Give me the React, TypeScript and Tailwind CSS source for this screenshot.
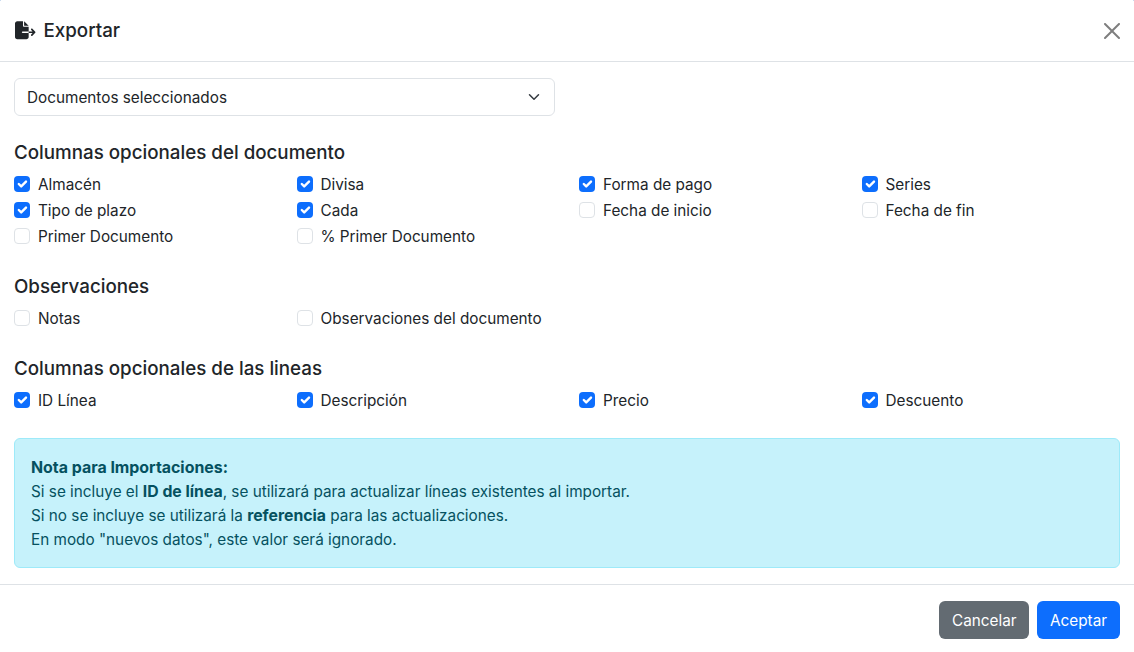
import { FaFileExport } from "react-icons/fa6";

interface Column {
  label: string;
  checked: boolean;
}

const documentColumns: Column[] = [
  { label: "Almacén", checked: true },
  { label: "Divisa", checked: true },
  { label: "Forma de pago", checked: true },
  { label: "Series", checked: true },
  { label: "Tipo de plazo", checked: true },
  { label: "Cada", checked: true },
  { label: "Fecha de inicio", checked: false },
  { label: "Fecha de fin", checked: false },
  { label: "Primer Documento", checked: false },
  { label: "% Primer Documento", checked: false },
];

const noteColumns: Column[] = [
  { label: "Notas", checked: false },
  { label: "Observaciones del documento", checked: false },
];

const lineColumns: Column[] = [
  { label: "ID Línea", checked: true },
  { label: "Descripción", checked: true },
  { label: "Precio", checked: true },
  { label: "Descuento", checked: true },
];

function CheckItem({ label, checked }: Column) {
  return (
    <label className="flex h-6 items-center gap-2">
      {checked ? (
        <span className="flex h-4 w-4 items-center justify-center rounded-[4px] bg-[#0d6efd]">
          <svg viewBox="0 0 20 20" className="h-4 w-4">
            <path
              d="m6 10 3 3 6-6"
              fill="none"
              stroke="#fff"
              strokeLinecap="round"
              strokeLinejoin="round"
              strokeWidth="3"
            />
          </svg>
        </span>
      ) : (
        <span className="h-4 w-4 rounded-[4px] border border-[#dee2e6] bg-white" />
      )}
      <span className="pt-0.5">{label}</span>
    </label>
  );
}

function ColumnGroup({ title, columns }: { title: string; columns: Column[] }) {
  return (
    <section>
      <h5 className="pt-px text-[18.75px] leading-6 font-medium">{title}</h5>
      <div className="mt-[7px] grid grid-cols-4 gap-x-6 gap-y-0.5">
        {columns.map((column) => (
          <CheckItem key={column.label} {...column} />
        ))}
      </div>
    </section>
  );
}

export default function App() {
  return (
    <div className="h-[652px] w-[1134px] bg-[#2f6fc0]">
      <div className="flex h-full flex-col overflow-hidden rounded-t-[1px] bg-white font-['Inter',sans-serif] text-[15.3px] leading-6 text-[#212529]">
        <header className="flex h-[62px] items-center justify-between border-b border-[#dee2e6] pr-3.5 pl-[15px]">
          <h4 className="flex items-center gap-2 text-[18.75px] font-medium">
            <FaFileExport className="text-[20.5px]" />
            Exportar
          </h4>
          <button className="h-4 w-4">
            <svg viewBox="0 0 16 16" className="h-4 w-4 opacity-50">
              <path d="M.293.293a1 1 0 0 1 1.414 0L8 6.586 14.293.293a1 1 0 1 1 1.414 1.414L9.414 8l6.293 6.293a1 1 0 0 1-1.414 1.414L8 9.414l-6.293 6.293a1 1 0 0 1-1.414-1.414L6.586 8 .293 1.707a1 1 0 0 1 0-1.414z" />
            </svg>
          </button>
        </header>

        <main className="flex-1 px-3.5 pt-4">
          <div className="flex h-[38px] w-[541px] items-center justify-between rounded-md border border-[#dee2e6] px-3">
            <span className="pt-0.5">Documentos seleccionados</span>
            <svg viewBox="0 0 16 16" className="h-3 w-4">
              <path
                d="m2 5 6 6 6-6"
                fill="none"
                stroke="#343a40"
                strokeLinecap="round"
                strokeLinejoin="round"
                strokeWidth="2"
              />
            </svg>
          </div>

          <div className="mt-6 flex flex-col gap-[26px]">
            <ColumnGroup title="Columnas opcionales del documento" columns={documentColumns} />
            <ColumnGroup title="Observaciones" columns={noteColumns} />
            <ColumnGroup title="Columnas opcionales de las lineas" columns={lineColumns} />
          </div>

          <div className="mt-[26px] rounded-md border border-[#9eeaf9] bg-[#c6f2fb] px-4 pt-[17px] pb-[15px] text-[#055160]">
            <p>
              <strong className="text-[15.9px] leading-none">Nota para Importaciones:</strong>
            </p>
            <p>
              Si se incluye el <strong className="text-[15.8px] leading-none">ID de línea</strong>, se utilizará para actualizar líneas existentes al importar.
            </p>
            <p>
              Si no se incluye se utilizará la <strong className="text-[15.8px] leading-none">referencia</strong> para las actualizaciones.
            </p>
            <p>En modo "nuevos datos", este valor será ignorado.</p>
          </div>
        </main>

        <footer className="flex h-[68px] items-start justify-end gap-2 border-t border-[#dee2e6] px-3.5 pt-4">
          <button className="h-[38px] rounded-md bg-[#636b72] px-[12.5px] pt-0.5 text-white">Cancelar</button>
          <button className="h-[38px] rounded-md bg-[#0d6efd] px-[13px] pt-0.5 text-white">Aceptar</button>
        </footer>
      </div>
    </div>
  );
}
